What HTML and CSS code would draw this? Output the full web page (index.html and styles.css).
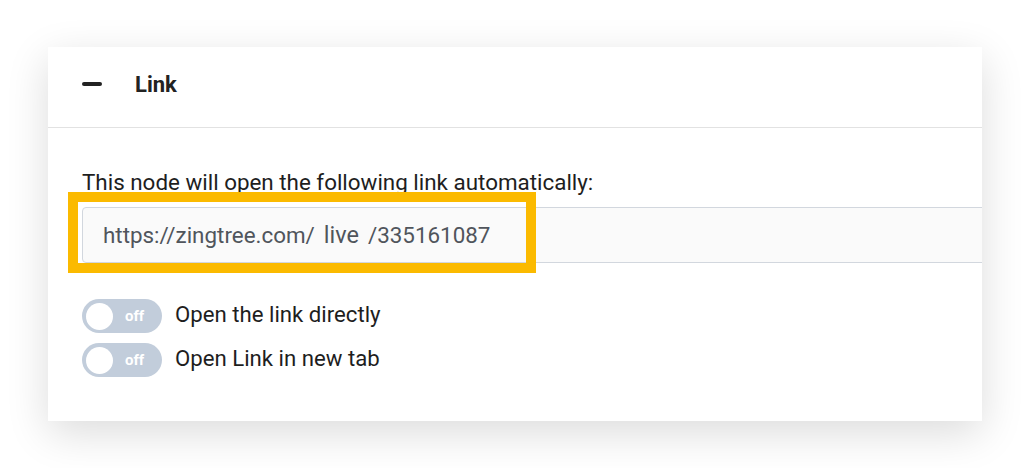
FILE: index.html
```html
<!doctype html>
<html lang="en">
<head>
	<meta charset="UTF-8">
	<title>Link</title>
	<link rel="stylesheet" href="styles.css">
</head>
<body>
	<div class="card">
		<div class="card-head">
			<span class="collapse"></span>
			<h2>Link</h2>
		</div>
		<div class="card-body">
			<p class="intro">This node will open the following link automatically:</p>
			<div class="url-wrap">
				<div class="url-input">https://zingtree.com/<span class="slug">live</span>/335161087</div>
				<div class="highlight"></div>
			</div>
			<div class="options">
				<label class="option">
					<span class="toggle"><span class="knob"></span><span class="state">off</span></span>
					<span class="option-text">Open the link directly</span>
				</label>
				<label class="option">
					<span class="toggle"><span class="knob"></span><span class="state">off</span></span>
					<span class="option-text">Open Link in new tab</span>
				</label>
			</div>
		</div>
	</div>
</body>
</html>
```

FILE: styles.css
```css
* {
	margin: 0;
	padding: 0;
	box-sizing: border-box;
}

body {
	background: #fff;
	font-family: Roboto, "Liberation Sans", sans-serif;
	color: #222;
	padding: 47px 48px;
}

.card {
	width: 934px;
	height: 374px;
	background: #fff;
	box-shadow: 0 12px 40px rgba(0, 0, 0, 0.14);
	overflow: hidden;
}

.card-head {
	height: 81px;
	display: flex;
	align-items: center;
	padding: 0 0 6px 34px;
	border-bottom: 1px solid #e2e2e2;
}

.collapse {
	width: 20px;
	height: 4px;
	border-radius: 2px;
	background: #222;
	margin-right: 33px;
}

.card-head h2 {
	font-size: 22px;
	font-weight: 700;
	color: #222;
}

.card-body {
	padding: 41px 0 0 34px;
}

.intro {
	font-size: 22.4px;
	line-height: 26px;
	color: #1e1e1e;
	margin-bottom: 12px;
}

.url-wrap {
	position: relative;
}

.url-input {
	height: 56px;
	width: 920px;
	border: 1px solid #d2d7de;
	border-radius: 4px;
	background: #fafafa;
	font-size: 22.4px;
	color: #50555c;
	line-height: 54px;
	padding-left: 20px;
}

.slug {
	font-size: 23.5px;
	margin: 0 9px 0 9px;
}

.highlight {
	position: absolute;
	left: -14px;
	top: -15px;
	width: 468px;
	height: 81px;
	border: 10px solid #fbba00;
}

.options {
	margin-top: 36px;
	display: flex;
	flex-direction: column;
	gap: 10px;
}

.option {
	display: flex;
	align-items: center;
	font-size: 22.2px;
	color: #1e1e1e;
}

.option-text {
	padding-bottom: 5px;
}

.toggle {
	position: relative;
	width: 80px;
	height: 34px;
	border-radius: 17px;
	background: #c2cddb;
	margin-right: 13px;
	display: flex;
	align-items: center;
}

.knob {
	width: 27px;
	height: 27px;
	border-radius: 50%;
	background: #fff;
	margin-left: 4px;
}

.state {
	font-size: 15px;
	font-weight: 700;
	color: #fff;
	margin-left: 12px;
}
```
